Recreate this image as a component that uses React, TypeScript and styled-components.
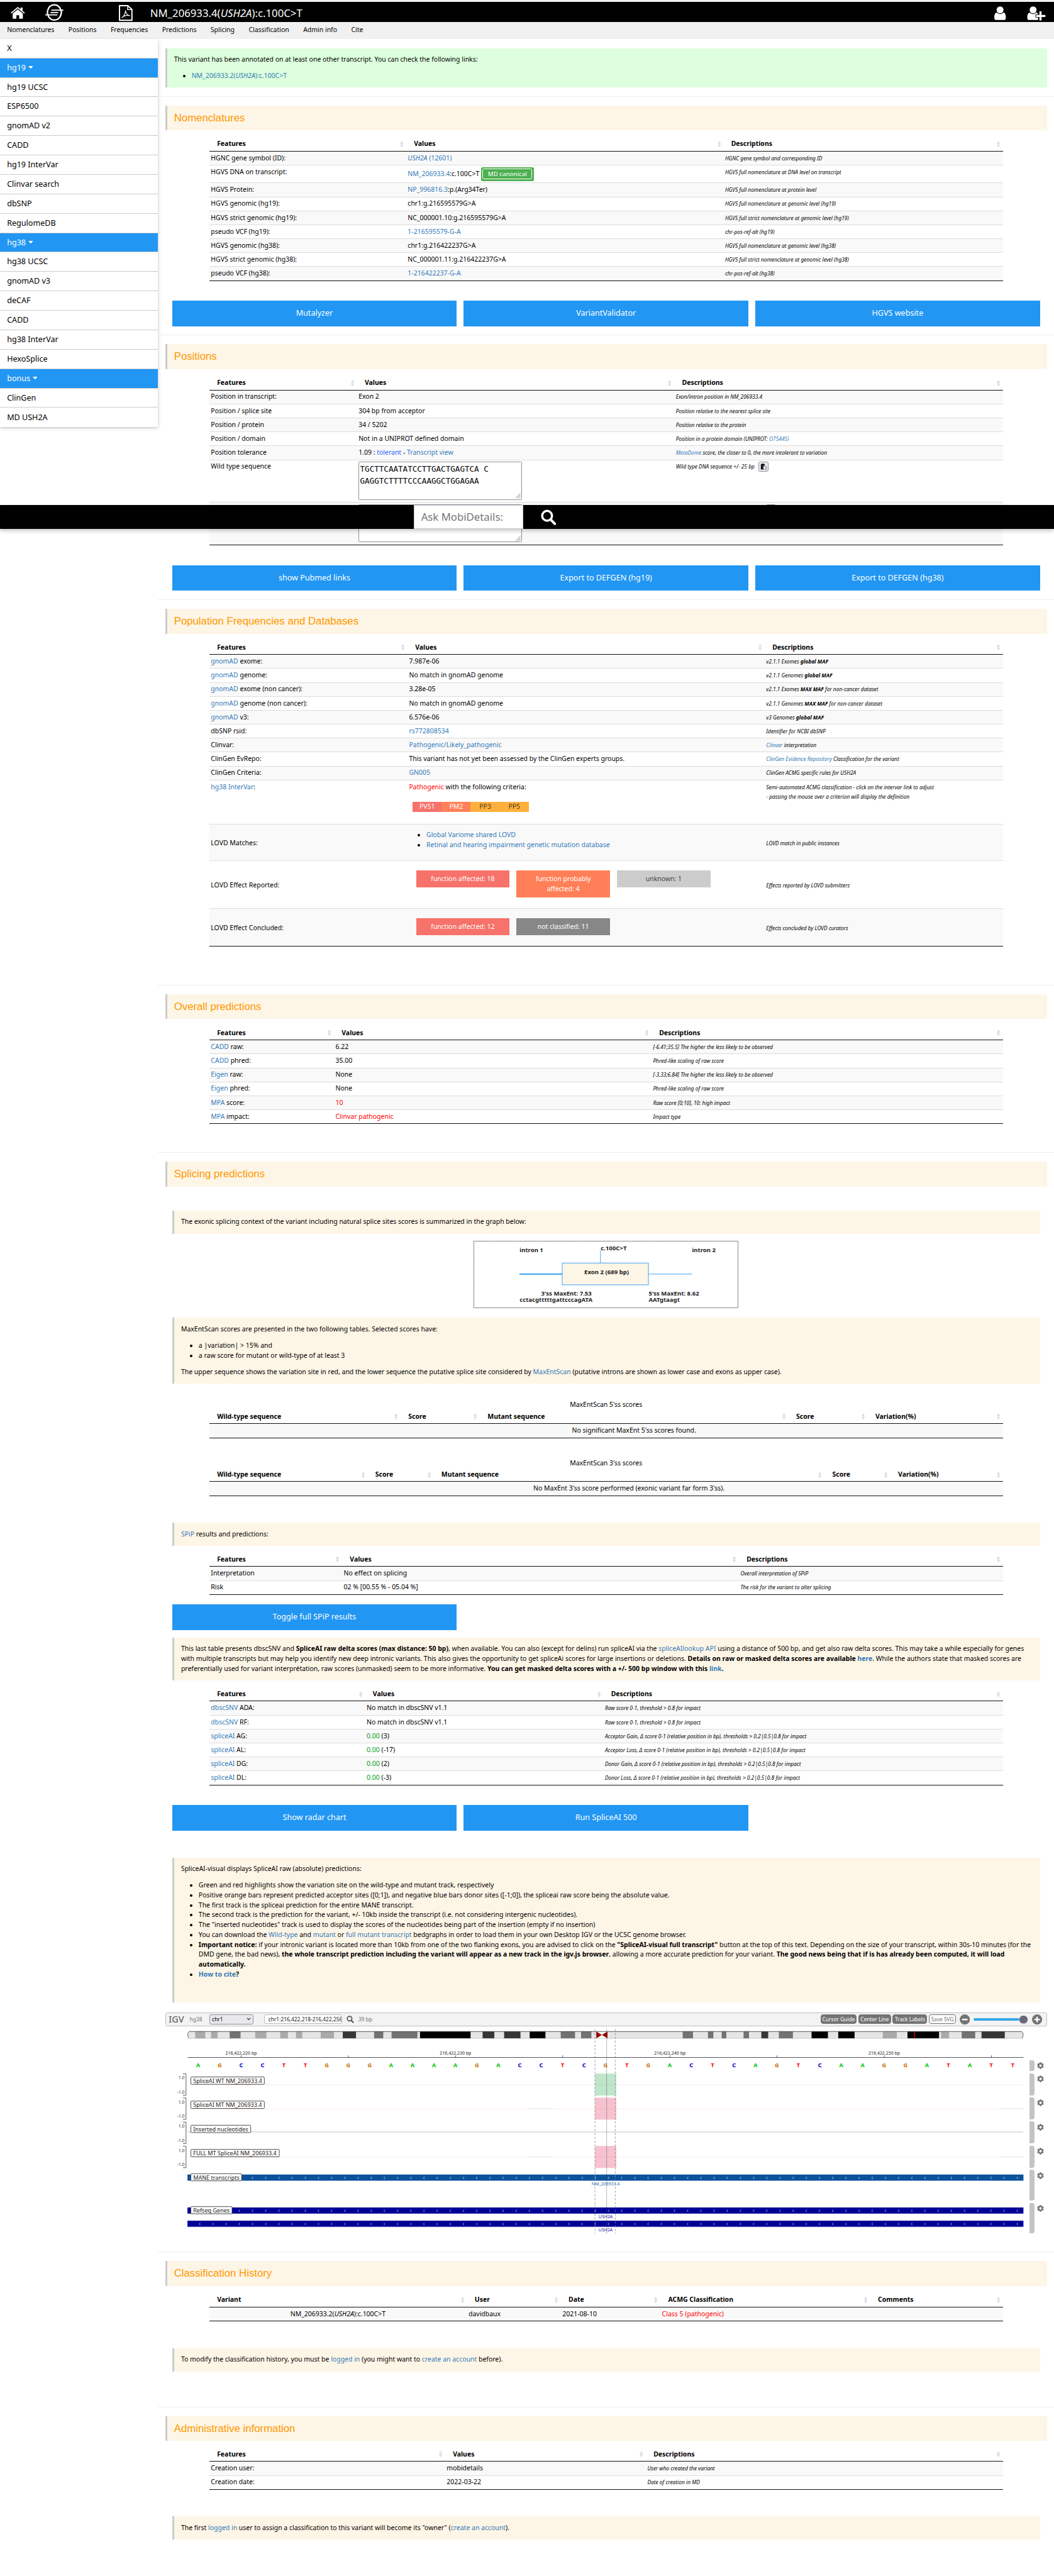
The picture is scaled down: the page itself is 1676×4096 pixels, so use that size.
import React, { Fragment, ReactNode } from "react";
import styled, { createGlobalStyle, css } from "styled-components";

const Global = createGlobalStyle`
  * { box-sizing: border-box; }
  html, body { margin: 0; padding: 0; background: #fff; overflow: hidden; }
`;

const Page = styled.div`
  position: relative;
  width: 1920px;
  height: 4692px;
  zoom: 0.872917;
  overflow: hidden;
  background: #fff;
  color: #000;
  font-family: "Noto Sans", "Open Sans", sans-serif;
  font-size: 12px;
  line-height: 18px;
`;

/* ---------- header ---------- */
const TopStrip = styled.div`
  height: 3px;
  background: #f1f1f1;
`;
const Header = styled.header`
  display: flex;
  align-items: center;
  height: 37px;
  padding: 0 15px 0 20px;
  background: #000;
  color: #fff;
`;
const Title = styled.h1`
  flex: 1;
  margin: 5px 0 0 31.5px;
  font-size: 19.2px;
  font-weight: 400;
  line-height: 28px;
`;
const HeaderIcon = styled.svg<{ $ml?: number; $mt?: number }>`
  display: block;
  flex: none;
  overflow: visible;
  margin-left: ${(p) => p.$ml ?? 0}px;
  margin-top: ${(p) => p.$mt ?? 0}px;
`;
const Nav = styled.nav`
  display: flex;
  height: 30.8px;
  padding-top: 6.4px;
  background: #f1f1f1;
`;
const NavItem = styled.a`
  padding: 0 12.8px;
`;

/* ---------- frame ---------- */
const Body = styled.div`
  display: flex;
  align-items: flex-start;
`;
const Sidebar = styled.aside`
  width: 288px;
  flex: none;
  background: #fff;
  box-shadow: 0 2px 4px rgba(0, 0, 0, 0.16), 0 2px 8px rgba(0, 0, 0, 0.12);
`;
const SideItem = styled.div<{ $head?: boolean }>`
  display: flex;
  align-items: center;
  gap: 4px;
  height: 35.38px;
  padding: 0 12.8px;
  font-size: 14.4px;
  border-bottom: 1px solid #ccc;
  background: ${(p) => (p.$head ? "#2196f3" : "#fff")};
  color: ${(p) => (p.$head ? "#fff" : "#000")};
  &:last-child { border-bottom: 0; }
`;
const Main = styled.main`
  flex: 1;
  min-width: 0;
`;
const Section = styled.section<{ $h: number; $line?: boolean }>`
  height: ${(p) => p.$h}px;
  padding: 16px 12.8px 0;
  border-top: 1px solid ${(p) => (p.$line === false ? "transparent" : "#eee")};
`;
const Heading = styled.h3`
  margin: 0;
  height: 45.2px;
  padding-left: 12.8px;
  border-left: 4px solid #ccc;
  background: #fdf5e6;
  color: #ff9800;
  font: 400 19.2px/45px "Liberation Sans", Arial, sans-serif;
`;
const Panel = styled.div<{ $h: number; $mt?: number; $green?: boolean }>`
  margin: ${(p) => p.$mt ?? 0}px ${(p) => (p.$green ? 0 : 12.8)}px 0;
  height: ${(p) => p.$h}px;
  padding: 12px 12.8px 0;
  border-left: 4px solid #ccc;
  background: ${(p) => (p.$green ? "#ddffdd" : "#fdf5e6")};
  white-space: nowrap;
`;
const Para = styled.p`
  margin: 0 0 12px;
`;
const List = styled.ul<{ $indent?: number }>`
  margin: 0 0 12px;
  padding-left: ${(p) => p.$indent ?? 32}px;
`;
const A = styled.a`
  color: #337ab7;
`;
const Colored = styled.span<{ $c: string }>`
  color: ${(p) => p.$c};
`;

const ButtonRow = styled.div<{ $mt: number }>`
  display: grid;
  grid-template-columns: repeat(3, 1fr);
  gap: 12.8px;
  margin: ${(p) => p.$mt}px 12.8px 0;
`;
const BlueButton = styled.a`
  height: 46.8px;
  background: #2196f3;
  color: #fff;
  font-size: 14.4px;
  line-height: 46.8px;
  text-align: center;
`;

/* ---------- tables ---------- */
const Table = styled.div<{ $mt: number }>`
  width: 1446px;
  margin: ${(p) => p.$mt}px 0 0 80.2px;
  border-bottom: 1px solid #111;
`;
const Caption = styled.div`
  text-align: center;
`;
const gridCols = css<{ $cols: string }>`
  display: grid;
  grid-template-columns: ${(p) => p.$cols};
`;
const HeadRow = styled.div<{ $cols: string }>`
  ${gridCols}
  height: 25.4px;
  border-bottom: 1px solid #111;
  font-weight: 700;
`;
const HeadCell = styled.div`
  display: flex;
  justify-content: space-between;
  align-items: center;
  padding: 0 5px 0 14.4px;
`;
const Row = styled.div<{ $cols: string; $h: number; $middle?: boolean; $odd: boolean; $first: boolean }>`
  ${gridCols}
  height: ${(p) => (p.$first ? p.$h : p.$h + 1)}px;
  border-top: ${(p) => (p.$first ? "0" : "1px solid #ddd")};
  align-items: ${(p) => (p.$middle ? "center" : "start")};
  background: ${(p) => (p.$odd ? "#f9f9f9" : "#fff")};
  white-space: nowrap;
`;
const Cell = styled.div<{ $center?: boolean }>`
  padding: 3.2px 3.2px 0;
  text-align: ${(p) => (p.$center ? "center" : "left")};
`;
const Desc = styled.em`
  font-size: 9.6px;
`;

const SortIcon = () => (
  <svg width="6" height="12" viewBox="0 0 6 12">
    <path d="M3 0L6 5.4H0zM3 12L6 6.6H0z" fill="#dcdcdc" />
  </svg>
);

type R = { c: ReactNode[]; h?: number; middle?: boolean; center?: number };

const DataTable = ({ mt, cols, heads, rows, caption, descLast = true }: {
  mt: number; cols: number[]; heads: string[]; rows: R[]; caption?: string; descLast?: boolean;
}) => {
  const grid = cols.map((c) => c + "px").join(" ") + " 1fr";
  return (
    <Table $mt={mt}>
      {caption && <Caption>{caption}</Caption>}
      <HeadRow $cols={grid}>
        {heads.map((h, i) => (
          <HeadCell key={i}>{h}<SortIcon /></HeadCell>
        ))}
      </HeadRow>
      {rows.map((r, i) => (
        <Row key={i} $cols={grid} $h={r.h ?? 24.4} $middle={r.middle} $odd={i % 2 === 0} $first={i === 0}>
          {r.c.map((x, j) => (
            <Cell key={j} $center={r.center === j}>
              {descLast && j === 2 ? <Desc>{x}</Desc> : x}
            </Cell>
          ))}
        </Row>
      ))}
    </Table>
  );
};
const FVD = ["Features", "Values", "Descriptions"];

const BadgeLine = styled.div`
  display: flex;
  align-items: center;
  height: 25px;
`;
const Badge = styled.span`
  margin-left: 3px;
  padding: 3px;
  border-radius: 3px;
  background: #4caf50;
  color: #fff;
`;
const BadgeInner = styled.span`
  display: block;
  width: 90px;
  border: 1px solid #fff;
  border-radius: 3px;
  font-size: 11.2px;
  line-height: 17.4px;
  text-align: center;
`;
const SequenceBox = styled.div`
  position: relative;
  width: 298px;
  height: 69.8px;
  margin-top: -0.4px;
  padding: 2px 1.6px;
  border: 1px solid #8f8f9d;
  border-radius: 2px;
  background: #fff;
  font: 14.4px/21.6px "DejaVu Sans Mono", monospace;
`;
const Grip = styled.svg`
  position: absolute;
  right: 1px;
  bottom: 1px;
`;
const CopyButton = styled.span<{ $ml: number }>`
  display: inline-flex;
  align-items: center;
  justify-content: center;
  width: 18px;
  height: 18px;
  margin-left: ${(p) => p.$ml}px;
  vertical-align: top;
  border: 1px solid #8f8f9d;
  border-radius: 3px;
  background: #e9e9ed;
`;
const Criteria = styled.div`
  display: flex;
  margin: 18.5px 0 0 6.5px;
`;
const Criterion = styled.span<{ $bg: string; $c: string }>`
  width: 52.9px;
  height: 17.9px;
  background: ${(p) => p.$bg};
  color: ${(p) => p.$c};
  text-align: center;
`;
const Effects = styled.div<{ $up: number }>`
  display: flex;
  align-items: flex-start;
  gap: 12.8px;
  padding-left: 12.8px;
  margin-top: ${(p) => p.$up}px;
`;
const Effect = styled.div<{ $bg: string; $c?: string }>`
  width: 170.2px;
  padding: 6.4px 12.8px;
  background: ${(p) => p.$bg};
  color: ${(p) => p.$c ?? "#fff"};
  text-align: center;
  white-space: normal;
`;

const CaretIcon = () => (
  <svg width="9" height="5" viewBox="0 0 9 5"><path d="M0 0H9L4.5 5z" fill="#fff" /></svg>
);
const CopyIcon = () => (
  <svg width="11" height="12" viewBox="0 0 11 12">
    <path d="M1 1h2l1-1h1l1 1h2v2.6H5V11H1z" fill="#111" />
    <path d="M5.6 4.6h3L10.5 6.5V11.5H5.6z" fill="#fff" stroke="#111" strokeWidth=".9" />
  </svg>
);
const Sequence = ({ lines }: { lines: string[] }) => (
  <SequenceBox>
    {lines.map((l, i) => <div key={i}>{l}</div>)}
    <Grip width="11" height="11" viewBox="0 0 11 11">
      <path d="M1 10.5L10.5 1M4 10.5L10.5 4M7 10.5L10.5 7" stroke="#777" strokeWidth=".9" />
    </Grip>
  </SequenceBox>
);

/* ---------- search bar over the page ---------- */
const SearchBar = styled.div`
  position: absolute;
  left: 0;
  right: 0;
  top: 920px;
  height: 44px;
  display: flex;
  align-items: center;
  padding-left: 754px;
  background: #000;
  box-shadow: 0 3px 8px rgba(0, 0, 0, 0.25);
`;
const SearchInput = styled.div`
  width: 199.6px;
  height: 43.4px;
  padding-left: 12px;
  border: 1px solid #ccc;
  background: #fff;
  color: #757575;
  font-size: 19.2px;
  line-height: 42px;
`;
const SearchGlass = styled.svg`
  margin-left: 32px;
`;

/* ---------- splicing figure ---------- */
const Figure = styled.svg`
  display: block;
  margin: 13px auto 0;
  border: 1px dotted #111;
  font: 700 11.2px "Noto Sans", sans-serif;
`;
const ExonFigure = () => (
  <Figure width="482" height="122.4" viewBox="0 0 482 122.4" fill="#222">
    <text x="81" y="20.3">intron 1</text>
    <text x="231.5" y="16.6">c.100C&gt;T</text>
    <text x="401" y="20.3">intron 2</text>
    <path d="M231 16V40" stroke="#2196f3" strokeWidth="1" />
    <path d="M80.5 60.5H160" stroke="#2196f3" strokeWidth="2" />
    <path d="M320 60.5H401" stroke="#90caf9" strokeWidth="2" />
    <rect x="160" y="40" width="160" height="40.5" fill="#fdf5e6" stroke="#2196f3" />
    <text x="201" y="60.4">Exon 2 (689 bp)</text>
    <text x="121" y="100.8">3'ss MaxEnt: 7.53</text>
    <text x="81" y="112.6">cctacgtttttgattcccagATA</text>
    <text x="320.5" y="100.8">5'ss MaxEnt: 8.62</text>
    <text x="320.5" y="112.6">AATgtaagt</text>
  </Figure>
);

/* ---------- genome browser ---------- */
const Igv = styled.div`
  margin-top: 18.2px;
  font-size: 9.6px;
  color: #737373;
`;
const IgvNav = styled.div`
  display: flex;
  align-items: center;
  height: 25px;
  padding: 0 7px 0 5.4px;
  border: 1px solid #bfbfbf;
  border-radius: 3px;
  background: #f3f3f3;
`;
const IgvLogo = styled.span`
  width: 38.2px;
  font-size: 16.4px;
  font-weight: 500;
  color: #666;
`;
const IgvText = styled.span<{ $w: number; $pl?: number }>`
  width: ${(p) => p.$w}px;
  padding-left: ${(p) => p.$pl ?? 0}px;
`;
const IgvSelect = styled.span`
  display: flex;
  align-items: center;
  justify-content: space-between;
  width: 79.5px;
  height: 18.6px;
  padding: 0 3px 0 3.4px;
  border: 1px solid #8f8f9d;
  border-radius: 3px;
  background: #e9e9ed;
  color: #000;
`;
const IgvInput = styled.span`
  width: 142px;
  height: 17px;
  margin: 0 7px 0 20.5px;
  padding-left: 6px;
  border: 1px solid #bbb;
  border-radius: 3px;
  background: #fff;
  color: #222;
  line-height: 15.5px;
`;
const InputClip = styled.span`
  display: block;
  width: 133.5px;
  overflow: hidden;
  white-space: nowrap;
`;
const IgvButton = styled.span<{ $w: number; $plain?: boolean }>`
  width: ${(p) => p.$w}px;
  height: 17px;
  margin-right: 3.2px;
  border: 1px solid #737373;
  border-radius: 4.5px;
  background: ${(p) => (p.$plain ? "#fff" : "#737373")};
  color: ${(p) => (p.$plain ? "#737373" : "#fff")};
  line-height: 15.6px;
  text-align: center;
`;
const Spacer = styled.span`
  flex: 1;
`;
const ZoomControl = styled.span`
  display: flex;
  align-items: center;
  margin-left: 4px;
`;
const Slider = styled.span`
  display: flex;
  align-items: center;
  width: 99px;
  margin: 0 8px 0 6.5px;
`;
const SliderTrack = styled.span`
  width: 84px;
  height: 4.8px;
  border-radius: 2.4px;
  background: #35a8e8;
`;
const SliderKnob = styled.span`
  width: 14px;
  height: 14px;
  border-radius: 50%;
  background: #69677a;
  box-shadow: 0 1px 2px rgba(0, 0, 0, 0.4);
`;
const Tracks = styled.div`
  display: flex;
`;
const TrackControls = styled.div`
  display: flex;
  flex-direction: column;
  gap: 4px;
  padding-top: 62px;
`;
const TrackControl = styled.div<{ $h: number }>`
  display: flex;
  justify-content: space-between;
  width: 27px;
  height: ${(p) => p.$h}px;
`;
const Handle = styled.span`
  width: 10px;
  border-radius: 0 4px 4px 0;
  background: #c4c4c4;
`;
const GearSvg = styled.svg`
  margin-top: 4px;
`;
const Gear = () => (
  <GearSvg width="12.6" height="12.6" viewBox="0 0 512 512" fill="#737373">
    <path d="M487 316l-43-25c4-23 4-47 0-70l43-25c5-3 7-9 5-14-11-36-30-68-55-95-4-4-10-5-15-2l-43 25c-18-15-39-27-61-35V25c0-6-4-11-9-12-37-8-75-8-110 0-5 1-9 6-9 12v50c-22 8-43 20-61 35L86 85c-5-3-11-2-15 2-25 27-44 59-55 95-2 5 0 11 5 14l43 25c-4 23-4 47 0 70l-43 25c-5 3-7 9-5 14 11 36 30 68 55 95 4 4 10 5 15 2l43-25c18 15 39 27 61 35v50c0 6 4 11 9 12 37 8 75 8 110 0 5-1 9-6 9-12v-50c22-8 43-20 61-35l43 25c5 3 11 2 15-2 25-27 44-59 55-95 2-5 0-11-5-14zM256 346a90 90 0 1 1 0-180 90 90 0 0 1 0 180z" fillRule="evenodd" />
  </GearSvg>
);
const ZoomRound = ({ plus }: { plus?: boolean }) => (
  <svg width="18.6" height="18.6" viewBox="0 0 18.6 18.6">
    <circle cx="9.3" cy="9.3" r="9.3" fill="#737373" />
    <path d={plus ? "M4.3 9.3h10M9.3 4.3v10" : "M4.3 9.3h10"} stroke="#fff" strokeWidth="2.8" />
  </svg>
);

const BANDS: [number, number, string][] = [
  [14.1, 32.4, "#aaa"], [42.9, 54.9, "#aaa"], [76.9, 96.7, "#727272"], [123.4, 143.8, "#aaa"],
  [168.9, 183, "#aaa"], [197.7, 209.2, "#aaa"], [242.7, 266.7, "#aaa"], [282.9, 307, "#363636"],
  [340, 356.7, "#727272"], [371.8, 418.9, "#727272"], [423.6, 515.7, "#000"], [537.6, 559, "#363636"],
  [576.8, 606.6, "#363636"], [623.4, 652.1, "#000"], [679.9, 706, "#727272"], [717, 735.8, "#727272"],
  [902.1, 920.9, "#727272"], [948.1, 958, "#727272"], [973.2, 981.6, "#727272"], [1013, 1022.9, "#727272"],
  [1045.4, 1057.9, "#363636"], [1077.3, 1102.9, "#727272"], [1136.9, 1166.7, "#000"], [1185.5, 1215.3, "#000"],
  [1266.6, 1292.2, "#aaa"], [1311.6, 1369.1, "#000"], [1372.8, 1387.4, "#aaa"], [1410.4, 1435, "#727272"],
  [1446.5, 1488.9, "#363636"],
];
const SEQ = "AGCCTTGGGAAAAGACCTCGTGACTCAGTCAAGGATATT";
const BASE: Record<string, string> = { A: "#00c800", C: "#0000c8", G: "#d17105", T: "#ff0000" };
const STEP = 1522.8 / 39;
const X0 = 40.2;
const WIDTH = 1522.8;
const LABELS: [number, number, number, string][] = [
  [92, 133.8, 13.4, "SpliceAI WT NM_206933.4"],
  [136, 133.8, 13.4, "SpliceAI MT NM_206933.4"],
  [180, 109, 13.4, "Inserted nucleotides"],
  [224, 161, 13.4, "FULL MT SpliceAI NM_206933.4"],
  [268.2, 92.5, 13, "MANE transcripts"],
  [328.2, 75, 13, "Refseq Genes"],
];
const GENES: [number, string, string, string, string][] = [
  [270, "#0b529c", "#c9dcf0", "NM_206933.4", "#2b6cb0"],
  [330, "#000096", "#c4c4ee", "USH2A", "#2020a0"],
  [354, "#000096", "#c4c4ee", "USH2A", "#2020a0"],
];
const TrackSvg = styled.svg`
  display: block;
  flex: none;
  font: 8px "Noto Sans", sans-serif;
`;
const TrackCanvas = () => (
  <TrackSvg width="1574" height="378" viewBox="0 0 1574 378">
    <clipPath id="chrom"><rect x={X0} y="9" width={WIDTH} height="13" rx="5" /></clipPath>
    <g clipPath="url(#chrom)">
      <rect x={X0} y="9" width={WIDTH} height="13" fill="#e5e5e5" />
      {BANDS.map(([a, b, c], i) => <rect key={i} x={X0 + a} y="9" width={b - a} height="13" fill={c} />)}
    </g>
    <rect x={X0 + 744.7} y="9" width="20.4" height="13" fill="#fff" />
    <path d={`M${X0 + 744.7} 9.5L${X0 + 755} 15.5L${X0 + 744.7} 22zM${X0 + 765.1} 9.5L${X0 + 755} 15.5L${X0 + 765.1} 22z`} fill="#960000" />
    <path d={`M${X0 + 3} 9.5H${X0 + WIDTH - 3}`} stroke="#444" />
    <path d={`M${X0 + 3} 22H${X0 + WIDTH - 3}`} stroke="#999" strokeWidth=".5" />
    <path d={`M${X0 + 3} 9.5q-2.5 1 -2.5 6t2.5 6.5M${X0 + WIDTH - 3} 9.5q2.5 1 2.5 6t-2.5 6.5`} fill="none" stroke="#555" />
    <path d={`M${X0 + 1324.1} 9v13`} stroke="#f00" strokeWidth="1.4" />

    <path d={`M${X0} 56.7H${X0 + WIDTH}`} stroke="#555" strokeWidth="1.2" />
    {[0, 1, 2, 3, 4, 5, 6, 7].map((i) => (
      <path key={i} d={`M${138 + i * 195.25} 53v4`} stroke="#333" strokeWidth=".9" />
    ))}
    {["216,422,220 bp", "216,422,230 bp", "216,422,240 bp", "216,422,250 bp"].map((t, i) => (
      <text key={t} x={138 + i * 390.5} y="51.5" textAnchor="middle" fill="#222">{t}</text>
    ))}
    {SEQ.split("").map((b, i) => (
      <text key={i} x={X0 + STEP * (i + 0.5)} y="74.4" textAnchor="middle" fontSize="10.4" fontWeight="700" fill={BASE[b]}>{b}</text>
    ))}

    {[86, 130, 174, 218].map((y, i) => (
      <Fragment key={y}>
        <path d={`M32 ${y + 0.5}h5.6v39h-5.6`} fill="none" stroke="#444" />
        <text x="35" y={y + 10.7} textAnchor="end" fill="#333">1.0</text>
        <text x="35" y={y + 36.6} textAnchor="end" fill="#333">-1.0</text>
        {i !== 2 && (
          <>
            <rect x={X0 + 742.1} y={y} width="39.2" height="40" fill={i === 0 ? "#bfe6cc" : "#f6c2cf"} />
            <path d={`M${X0} ${y + 20.4}H${X0 + WIDTH}`} stroke="#d2691e" strokeOpacity=".15" strokeWidth="1" />
            <rect x="117.6" y={y + 18} width="40" height="2" fill="#c97a3c" />
            {i > 0 && <rect x="665" y={y + 19} width="40" height="1.4" fill="#e8edf2" />}
            {i > 0 && <rect x="1523.5" y={y + 19} width="39.5" height="1.4" fill="#e8edf2" />}
          </>
        )}
        {i === 2 && <path d={`M${X0} ${y + 18.4}H${X0 + WIDTH}`} stroke="#777" strokeDasharray="1.15 1.15" />}
      </Fragment>
    ))}

    {GENES.map(([y, c, edge, name, tc], i) => (
      <Fragment key={i}>
        <rect x={X0} y={y} width={WIDTH} height="11.8" fill={edge} />
        <rect x={X0} y={y} width={WIDTH} height="11" fill={c} />
        {Array.from({ length: 63 }, (_, k) => {
          const x = 62 + k * 24.02;
          return <path key={k} d={`M${x + 1.6} ${y + 4}l-1.8 2l1.8 2`} fill="none" stroke="#fff" strokeWidth=".8" />;
        })}
        <text x="802" y={y + 19.6} textAnchor="middle" fill={tc}>{name}</text>
      </Fragment>
    ))}

    {LABELS.map(([y, w, h, t]) => (
      <g key={t}>
        <rect x="46.4" y={y + 0.2} width={w} height={h} rx="1.2" fill="#fff" stroke="#333" />
        <text x="50.6" y={y + 10.8} fontSize="10.4" fill="#222">{t}</text>
      </g>
    ))}

    <path d="M782.5 5V378M819.5 5V378" stroke="#888" strokeWidth=".9" strokeDasharray="4 3" fill="none" />
    <path d="M803.8 5V378" stroke="#444" strokeWidth=".9" strokeDasharray="1.2 1.2" fill="none" />
  </TrackSvg>
);

const Browser = () => (
  <Igv>
    <IgvNav>
      <IgvLogo>IGV</IgvLogo>
      <IgvText $w={36.2}>hg38</IgvText>
      <IgvSelect>
        chr1
        <svg width="8" height="5" viewBox="0 0 8 5"><path d="M1 1l3 3 3-3" fill="none" stroke="#222" strokeWidth="1.2" /></svg>
      </IgvSelect>
      <IgvInput><InputClip>chr1:216,422,218-216,422,256</InputClip></IgvInput>
      <svg width="14" height="14" viewBox="0 0 14 14" fill="none" stroke="#555">
        <circle cx="5.6" cy="5.4" r="4.2" strokeWidth="2" /><path d="M8.6 8.6l4.2 4.2" strokeWidth="2.4" />
      </svg>
      <IgvText $w={60} $pl={8}>39 bp</IgvText>
      <Spacer />
      <IgvButton $w={66}>Cursor Guide</IgvButton>
      <IgvButton $w={59}>Center Line</IgvButton>
      <IgvButton $w={63}>Track Labels</IgvButton>
      <IgvButton $w={49} $plain>Save SVG</IgvButton>
      <ZoomControl>
        <ZoomRound />
        <Slider><SliderTrack /><SliderKnob /></Slider>
        <ZoomRound plus />
      </ZoomControl>
    </IgvNav>
    <Tracks>
      <TrackCanvas />
      <TrackControls>
        {[20, 40, 40, 40, 40, 56, 56].map((h, i) => (
          <TrackControl key={i} $h={h}><Handle /><Gear /></TrackControl>
        ))}
      </TrackControls>
    </Tracks>
  </Igv>
);

const SIDE = ["X", "*hg19", "hg19 UCSC", "ESP6500", "gnomAD v2", "CADD", "hg19 InterVar", "Clinvar search", "dbSNP", "RegulomeDB", "*hg38", "hg38 UCSC", "gnomAD v3", "deCAF", "CADD", "hg38 InterVar", "HexoSplice", "*bonus", "ClinGen", "MD USH2A"];
const NAV = ["Nomenclatures", "Positions", "Frequencies", "Predictions", "Splicing", "Classification", "Admin info", "Cite"];

export default function App() {
  const gnomad = <A>gnomAD</A>;
  return (
    <Page>
      <Global />
      <TopStrip />
      <Header>
        <HeaderIcon width="26" height="22" viewBox="0 0 26 22" fill="#fff" $mt={4}>
          <path d="M0 10.6L12.9 0 18 4.2V1h3.6v6.2L25.8 10.6 24.4 12 12.9 2.7 1.4 12z" />
          <path d="M12.9 4.6L22.2 12v8.6q0 .8-.8.8h-6v-6.2h-5v6.2h-6q-.8 0-.8-.8V12z" />
        </HeaderIcon>
        <HeaderIcon width="33" height="27" viewBox="0 0 33 27" fill="none" stroke="#fff" $ml={36} $mt={2}>
          <path d="M4.6 9.3A12 12 0 0 1 28 8.5M28.4 17.7A12 12 0 0 1 5 18.5" strokeWidth="2.6" />
          <path d="M28.4 8.5A12 12 0 0 1 28 18.5M4.6 9.3A12 12 0 0 0 4.6 17.5" strokeWidth="2.6" />
          <path d="M11 9.3h22M9.5 13.7h14M0 18h22" strokeWidth="2.1" />
        </HeaderIcon>
        <HeaderIcon width="25" height="29" viewBox="0 0 25 29" fill="none" stroke="#fff" $ml={102} $mt={4}>
          <path d="M1.2 1.2H16L23.8 8V27.8H1.2z" strokeWidth="2.2" />
          <path d="M16 1.2V8.4H23.8" strokeWidth="1.6" />
          <path d="M5 23.2C9 21.5 12.5 14.5 12 9.8C13 16 15.5 18.8 20.3 19.4C15.5 18.2 9.5 19.3 5 23.2z" strokeWidth="1.3" />
        </HeaderIcon>
        <Title>NM_206933.4(<i>USH2A</i>):c.100C&gt;T</Title>
        <HeaderIcon width="22" height="26" viewBox="0 0 22 26" fill="#fff" $mt={5}>
          <circle cx="10.6" cy="6.6" r="6.3" />
          <path d="M4.4 11.6Q10.6 17 16.8 11.6C20 12 21.1 16 21.1 20.5Q21.1 25 17.5 25H3.7Q.1 25 .1 20.5C.1 16 1.2 12 4.4 11.6z" />
        </HeaderIcon>
        <HeaderIcon width="34" height="26" viewBox="0 0 34 26" fill="#fff" $ml={38} $mt={5}>
          <circle cx="11.2" cy="6.6" r="6.3" />
          <path d="M5 11.6Q11 17 17 11.6C19 12 20 13 20.3 14.6H15.5V20.4H20.3V25H4Q.6 25 .6 20.5C.6 16 2 12 5 11.6z" />
          <path d="M16.6 15.8h6.1V9.2h3.9v6.6h6.9v3.7h-6.9v6.2h-3.9v-6.2h-6.1z" />
        </HeaderIcon>
      </Header>
      <Nav>{NAV.map((n) => <NavItem key={n}>{n}</NavItem>)}</Nav>

      <Body>
        <Sidebar>
          {SIDE.map((s, i) => (
            <SideItem key={i} $head={s[0] === "*"}>
              {s.replace("*", "")}{s[0] === "*" && <CaretIcon />}
            </SideItem>
          ))}
        </Sidebar>
        <Main>
          <Section $h={104} $line={false}>
            <Panel $h={71.8} $green>
              <Para>This variant has been annotated on at least one other transcript. You can check the following links:</Para>
              <List><li><A>NM_206933.2(<i>USH2A</i>):c.100C&gt;T</A></li></List>
            </Panel>
          </Section>

          <Section $h={435}>
            <Heading>Nomenclatures</Heading>
            <DataTable mt={13.4} cols={[358.6, 578]} heads={FVD} rows={[
              { c: ["HGNC gene symbol (ID):", <A><i>USH2A</i> (12601)</A>, "HGNC gene symbol and corresponding ID"] },
              { c: ["HGVS DNA on transcript:", <BadgeLine><span><A>NM_206933.4</A>:c.100C&gt;T</span><Badge><BadgeInner>MD canonical</BadgeInner></Badge></BadgeLine>, "HGVS full nomenclature at DNA level on transcript"], h: 31.4 },
              { c: ["HGVS Protein:", <><A>NP_996816.3</A>:p.(Arg34Ter)</>, "HGVS full nomenclature at protein level"] },
              { c: ["HGVS genomic (hg19):", "chr1:g.216595579G>A", "HGVS full nomenclature at genomic level (hg19)"] },
              { c: ["HGVS strict genomic (hg19):", "NC_000001.10:g.216595579G>A", "HGVS full strict nomenclature at genomic level (hg19)"] },
              { c: ["pseudo VCF (hg19):", <A>1-216595579-G-A</A>, "chr-pos-ref-alt (hg19)"] },
              { c: ["HGVS genomic (hg38):", "chr1:g.216422237G>A", "HGVS full nomenclature at genomic level (hg38)"] },
              { c: ["HGVS strict genomic (hg38):", "NC_000001.11:g.216422237G>A", "HGVS full strict nomenclature at genomic level (hg38)"] },
              { c: ["pseudo VCF (hg38):", <A>1-216422237-G-A</A>, "chr-pos-ref-alt (hg38)"] },
            ]} />
            <ButtonRow $mt={35.6}>
              <BlueButton>Mutalyzer</BlueButton><BlueButton>VariantValidator</BlueButton><BlueButton>HGVS website</BlueButton>
            </ButtonRow>
          </Section>

          <Section $h={482.2}>
            <Heading>Positions</Heading>
            <DataTable mt={13.4} cols={[269, 578]} heads={FVD} rows={[
              { c: ["Position in transcript:", "Exon 2", "Exon/intron position in NM_206933.4"] },
              { c: ["Position / splice site", "304 bp from acceptor", "Position relative to the nearest splice site"] },
              { c: ["Position / protein", "34 / 5202", "Position relative to the protein"] },
              { c: ["Position / domain", "Not in a UNIPROT defined domain", <>Position in a protein domain (UNIPROT: <A>O75445)</A></>] },
              { c: ["Position tolerance", <>1.09 : <Colored $c="#2e64fe">tolerant</Colored> - <A>Transcript view</A></>, <><A>MetaDome</A> score, the closer to 0, the more intolerant to variation</>] },
              { c: ["Wild type sequence", <Sequence lines={["TGCTTCAATATCCTTGACTGAGTCA C", "GAGGTCTTTTCCCAAGGCTGGAGAA"]} />, <>Wild type DNA sequence +/- 25 bp <CopyButton $ml={5}><CopyIcon /></CopyButton></>], h: 76.4 },
              { c: ["", <Sequence lines={[]} />, <CopyButton $ml={164}><CopyIcon /></CopyButton>], h: 77 },
            ]} />
            <ButtonRow $mt={36}>
              <BlueButton>show Pubmed links</BlueButton><BlueButton>Export to DEFGEN (hg19)</BlueButton><BlueButton>Export to DEFGEN (hg38)</BlueButton>
            </ButtonRow>
          </Section>

          <Section $h={701.8}>
            <Heading>Population Frequencies and Databases</Heading>
            <DataTable mt={13} cols={[361, 650.6]} heads={FVD} rows={[
              { c: [<>{gnomad} exome:</>, "7.987e-06", <>v2.1.1 Exomes <b>global MAF</b></>] },
              { c: [<>{gnomad} genome:</>, "No match in gnomAD genome", <>v2.1.1 Genomes <b>global MAF</b></>] },
              { c: [<>{gnomad} exome (non cancer):</>, "3.28e-05", <>v2.1.1 Exomes <b>MAX MAF</b> for non-cancer dataset</>] },
              { c: [<>{gnomad} genome (non cancer):</>, "No match in gnomAD genome", <>v2.1.1 Genomes <b>MAX MAF</b> for non-cancer dataset</>] },
              { c: [<>{gnomad} v3:</>, "6.576e-06", <>v3 Genomes <b>global MAF</b></>] },
              { c: ["dbSNP rsid:", <A>rs772808534</A>, "Identifier for NCBI dbSNP"] },
              { c: ["Clinvar:", <A>Pathogenic/Likely_pathogenic</A>, <><A>Clinvar</A> interpretation</>] },
              { c: ["ClinGen EvRepo:", "This variant has not yet been assessed by the ClinGen experts groups.", <><A>ClinGen Evidence Repository</A> Classification for the variant</>] },
              { c: ["ClinGen Criteria:", <A>GN005</A>, "ClinGen ACMG specific rules for USH2A"] },
              {
                c: [<><A>hg38 InterVar</A>:</>, <>
                  <Colored $c="#ff0000">Pathogenic</Colored> with the following criteria:
                  <Criteria>
                    <Criterion $bg="#f6726a" $c="#fff">PVS1</Criterion><Criterion $bg="#ff8058" $c="#fff">PM2</Criterion>
                    <Criterion $bg="#ffb03c" $c="#4d3c1a">PP3</Criterion><Criterion $bg="#ffb03c" $c="#4d3c1a">PP5</Criterion>
                  </Criteria>
                </>, <>Semi-automated ACMG classification - click on the intervar link to adjust<br />- passing the mouse over a criterion will display the definition</>], h: 79
              },
              { c: ["LOVD Matches:", <List $indent={31.6}><li><A>Global Variome shared LOVD</A></li><li><A>Retinal and hearing impairment genetic mutation database</A></li></List>, "LOVD match in public instances"], h: 66, middle: true },
              { c: ["LOVD Effect Reported:", <Effects $up={-5}><Effect $bg="#f6726a">function affected: 18</Effect><Effect $bg="#ff8058">function probably affected: 4</Effect><Effect $bg="#ccc" $c="#444">unknown: 1</Effect></Effects>, "Effects reported by LOVD submitters"], h: 86, middle: true },
              { c: ["LOVD Effect Concluded:", <Effects $up={-5}><Effect $bg="#f6726a">function affected: 12</Effect><Effect $bg="#878787">not classified: 11</Effect></Effects>, "Effects concluded by LOVD curators"], h: 67.8, middle: true },
            ]} />
          </Section>

          <Section $h={305.3}>
            <Heading>Overall predictions</Heading>
            <DataTable mt={13.4} cols={[227, 578.4]} heads={FVD} rows={[
              { c: [<><A>CADD</A> raw:</>, "6.22", "[-6.41;35.5] The higher the less likely to be observed"] },
              { c: [<><A>CADD</A> phred:</>, "35.00", "Phred-like scaling of raw score"] },
              { c: [<><A>Eigen</A> raw:</>, "None", "[-3.33;6.84] The higher the less likely to be observed"] },
              { c: [<><A>Eigen</A> phred:</>, "None", "Phred-like scaling of raw score"] },
              { c: [<><A>MPA</A> score:</>, <Colored $c="#ff0000">10</Colored>, "Raw score [0;10], 10: high impact"] },
              { c: [<><A>MPA</A> impact:</>, <Colored $c="#ff0000">Clinvar pathogenic</Colored>, "Impact type"] },
            ]} />
          </Section>

          <Section $h={2002.7}>
            <Heading>Splicing predictions</Heading>
            <Panel $h={42} $mt={43.8}>The exonic splicing context of the variant including natural splice sites scores is summarized in the graph below:</Panel>
            <ExonFigure />
            <Panel $h={120} $mt={17.6}>
              <Para>MaxEntScan scores are presented in the two following tables. Selected scores have:</Para>
              <List><li>a |variation| &gt; 15% and</li><li>a raw score for mutant or wild-type of at least 3</li></List>
              <Para>The upper sequence shows the variation site in red, and the lower sequence the putative splice site considered by <A>MaxEntScan</A> (putative introns are shown as lower case and exons as upper case).</Para>
            </Panel>
            <DataTable mt={30.4} caption="MaxEntScan 5'ss scores" cols={[348.5, 144.3, 562.2, 144.3]} descLast={false}
              heads={["Wild-type sequence", "Score", "Mutant sequence", "Score", "Variation(%)"]}
              rows={[{ c: ["", "", "No significant MaxEnt 5'ss scores found.", "", ""], center: 2 }]} />
            <DataTable mt={36.6} caption="MaxEntScan 3'ss scores" cols={[288.3, 120.3, 712.3, 119.7]} descLast={false}
              heads={["Wild-type sequence", "Score", "Mutant sequence", "Score", "Variation(%)"]}
              rows={[{ c: ["", "", "No MaxEnt 3'ss score performed (exonic variant far form 3'ss).", "", ""], center: 2 }]} />
            <Panel $h={42} $mt={48.8}><A>SPiP</A> results and predictions:</Panel>
            <DataTable mt={12.8} cols={[242, 722.7]} heads={FVD} rows={[
              { c: ["Interpretation", "No effect on splicing", "Overall interpretation of SPiP"] },
              { c: ["Risk", "02 % [00.55 % - 05.04 %]", "The risk for the variant to alter splicing"] },
            ]} />
            <ButtonRow $mt={18}><BlueButton>Toggle full SPiP results</BlueButton></ButtonRow>
            <Panel $h={78} $mt={13.2}>
              This last table presents dbscSNV and <b>SpliceAI raw delta scores (max distance: 50 bp)</b>, when available. You can also (except for delins) run spliceAI via the <A>spliceAIlookup API</A> using a distance of 500 bp, and get also raw delta scores. This may take a while especially for genes<br />
              with multiple transcripts but may help you identify new deep intronic variants. This also gives the opportunity to get spliceAi scores for large insertions or deletions. <b>Details on raw or masked delta scores are available <A>here</A></b>. While the authors state that masked scores are<br />
              preferentially used for variant interprétation, raw scores (unmasked) seem to be more informative. <b>You can get masked delta scores with a +/- 500 bp window with this <A>link</A>.</b>
            </Panel>
            <DataTable mt={13} cols={[283.8, 434]} heads={FVD} rows={[
              { c: [<><A>dbscSNV</A> ADA:</>, "No match in dbscSNV v1.1", "Raw score 0-1, threshold > 0.8 for impact"] },
              { c: [<><A>dbscSNV</A> RF:</>, "No match in dbscSNV v1.1", "Raw score 0-1, threshold > 0.8 for impact"] },
              { c: [<><A>spliceAI</A> AG:</>, <><Colored $c="#00a020">0.00</Colored> (3)</>, "Acceptor Gain, Δ score 0-1 (relative position in bp), thresholds > 0.2|0.5|0.8 for impact"] },
              { c: [<><A>spliceAI</A> AL:</>, <><Colored $c="#00a020">0.00</Colored> (-17)</>, "Acceptor Loss, Δ score 0-1 (relative position in bp), thresholds > 0.2|0.5|0.8 for impact"] },
              { c: [<><A>spliceAI</A> DG:</>, <><Colored $c="#00a020">0.00</Colored> (2)</>, "Donor Gain, Δ score 0-1 (relative position in bp), thresholds > 0.2|0.5|0.8 for impact"] },
              { c: [<><A>spliceAI</A> DL:</>, <><Colored $c="#00a020">0.00</Colored> (-3)</>, "Donor Loss, Δ score 0-1 (relative position in bp), thresholds > 0.2|0.5|0.8 for impact"] },
            ]} />
            <ButtonRow $mt={35.6}><BlueButton>Show radar chart</BlueButton><BlueButton>Run SpliceAI 500</BlueButton></ButtonRow>
            <Panel $h={263.8} $mt={49.4}>
              <Para>SpliceAI-visual displays SpliceAI raw (absolute) predictions:</Para>
              <List>
                <li>Green and red highlights show the variation site on the wild-type and mutant track, respectively</li>
                <li>Positive orange bars represent predicted acceptor sites ([0;1]), and negative blue bars donor sites ([-1;0]), the spliceai raw score being the absolute value.</li>
                <li>The first track is the spliceai prediction for the entire MANE transcript.</li>
                <li>The second track is the prediction for the variant, +/- 10kb inside the transcript (i.e. not considering intergenic nucleotides).</li>
                <li>The "inserted nucleotides" track is used to display the scores of the nucleotides being part of the insertion (empty if no insertion)</li>
                <li>You can download the <A>Wild-type</A> and <A>mutant</A> or <A>full mutant transcript</A> bedgraphs in order to load them in your own Desktop IGV or the UCSC genome browser.</li>
                <li><b>Important notice:</b> if your intronic variant is located more than 10kb from one of the two flanking exons, you are advised to click on the <b>"SpliceAI-visual full transcript"</b> button at the top of this text. Depending on the size of your transcript, within 30s-10 minutes (for the<br />
                  DMD gene, the bad news), <b>the whole transcript prediction including the variant will appear as a new track in the igv.js browser</b>, allowing a more accurate prediction for your variant. <b>The good news being that if is has already been computed, it will load<br />automatically.</b></li>
                <li><b><A>How to cite</A>?</b></li>
              </List>
            </Panel>
            <Browser />
          </Section>

          <Section $h={282.2}>
            <Heading>Classification History</Heading>
            <DataTable mt={13.4} cols={[469.3, 171, 181.4, 382.3]} descLast={false}
              heads={["Variant", "User", "Date", "ACMG Classification", "Comments"]}
              rows={[{ c: [<>NM_206933.2(<i>USH2A</i>):c.100C&gt;T</>, "davidbaux", "2021-08-10", <Colored $c="#ff0000">Class 5 (pathogenic)</Colored>, ""], center: 0 }]} />
            <Panel $h={42.2} $mt={49}>To modify the classification history, you must be <A>logged in</A> (you might want to <A>create an account</A> before).</Panel>
          </Section>

          <Section $h={308}>
            <Heading>Administrative information</Heading>
            <DataTable mt={12.4} cols={[429.6, 365.5]} heads={FVD} rows={[
              { c: ["Creation user:", "mobidetails", "User who created the variant"] },
              { c: ["Creation date:", "2022-03-22", "Date of creation in MD"] },
            ]} />
            <Panel $h={42} $mt={49}>The first <A>logged in</A> user to assign a classification to this variant will become its "owner" (<A>create an account</A>).</Panel>
          </Section>
        </Main>
      </Body>

      <SearchBar>
        <SearchInput>Ask MobiDetails:</SearchInput>
        <SearchGlass width="28" height="29" viewBox="0 0 28 29" fill="none" stroke="#fff">
          <circle cx="11.4" cy="11.6" r="8.9" strokeWidth="4" />
          <path d="M17.8 18.2l7.6 8" strokeWidth="4.6" strokeLinecap="round" />
        </SearchGlass>
      </SearchBar>
    </Page>
  );
}
